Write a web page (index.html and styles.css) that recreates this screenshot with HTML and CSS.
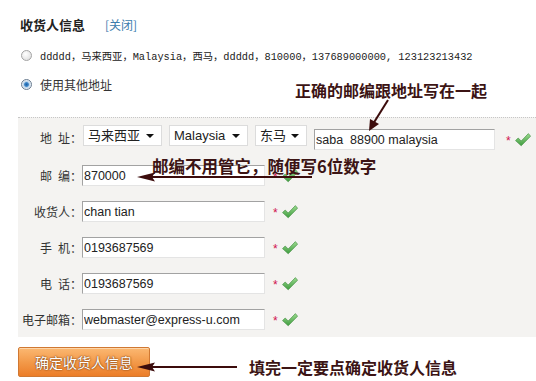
FILE: index.html
```html
<!DOCTYPE html>
<html>
	<head>
		<meta charset="utf-8">
		<link rel="stylesheet" href="styles.css">
	</head>
	<body>
		<div class="page">
			<div class="head">
				<h2>收货人信息</h2>
				<a href="#close" class="close">[关闭]</a>
			</div>

			<div class="opt">
				<span class="radio"></span>
				<span class="addr">ddddd，马来西亚，Malaysia，西马，ddddd，810000，137689000000, 123123213432</span>
			</div>
			<div class="opt">
				<span class="radio on"></span>
				<span class="other">使用其他地址</span>
			</div>

			<section class="panel">
				<div class="row first">
					<span class="lbl">地&ensp;址：</span>
					<span class="sel w1">马来西亚<i></i></span>
					<span class="sel w1">Malaysia<i></i></span>
					<span class="sel w2">东马<i></i></span>
					<input class="txt addr-in" type="text" value="saba  88900 malaysia">
					<span class="req">*</span>
					<svg class="ok" viewBox="0 0 16 14"><use href="#tick"/></svg>
				</div>
				<div class="row">
					<span class="lbl">邮&ensp;编：</span>
					<input class="txt" type="text" value="870000">
					<span class="req">*</span>
					<svg class="ok" viewBox="0 0 16 14"><use href="#tick"/></svg>
				</div>
				<div class="row">
					<span class="lbl">收货人：</span>
					<input class="txt" type="text" value="chan tian">
					<span class="req">*</span>
					<svg class="ok" viewBox="0 0 16 14"><use href="#tick"/></svg>
				</div>
				<div class="row">
					<span class="lbl">手&ensp;机：</span>
					<input class="txt" type="text" value="0193687569">
					<span class="req">*</span>
					<svg class="ok" viewBox="0 0 16 14"><use href="#tick"/></svg>
				</div>
				<div class="row">
					<span class="lbl">电&ensp;话：</span>
					<input class="txt" type="text" value="0193687569">
					<span class="req">*</span>
					<svg class="ok" viewBox="0 0 16 14"><use href="#tick"/></svg>
				</div>
				<div class="row">
					<span class="lbl">电子邮箱：</span>
					<input class="txt" type="text" value="webmaster@express-u.com">
					<span class="req">*</span>
					<svg class="ok" viewBox="0 0 16 14"><use href="#tick"/></svg>
				</div>
			</section>

			<button class="submit" type="button">确定收货人信息</button>

			<!-- notes drawn over the form -->
			<div class="note n1">正确的邮编跟地址写在一起</div>
			<div class="note n2">邮编不用管它，随便写6位数字</div>
			<div class="note n3">填完一定要点确定收货人信息</div>

			<svg class="arrows" width="536" height="381" viewBox="0 0 536 381">
				<defs>
					<linearGradient id="g" x1="0" y1="0" x2="0" y2="1">
						<stop offset="0" stop-color="#9ada8e"/>
						<stop offset="1" stop-color="#3f9c3f"/>
					</linearGradient>
					<path id="tick" d="M0.5 7.6 L3.2 5 L6.2 8 L13.4 0.6 L15.6 3.2 L6.2 12.8 Z" fill="url(#g)" stroke="#3a8a3a" stroke-width="0.6"/>
				</defs>
				<line x1="388" y1="100" x2="373" y2="124" />
				<polygon points="369,131 370,119 379,124" />
				<line x1="150" y1="177" x2="312" y2="177" />
				<polygon points="137,177 155,172.5 152,177 155,181.5" />
				<line x1="150" y1="367" x2="237" y2="367" />
				<polygon points="137,367 155,362.5 152,367 155,371.5" />
			</svg>
		</div>
	</body>
</html>
```
FILE: styles.css
```css
html, body {
	margin: 0;
	padding: 0;
	background: #fff;
}

.page {
	position: relative;
	width: 536px;
	height: 381px;
	overflow: hidden;
	color: #333;
	font-family: "Noto Sans CJK SC", sans-serif;
	font-size: 12px;
}

/* Header */
.head {
	display: flex;
	align-items: center;
	gap: 20px;
	height: 20px;
	margin: 14px 0 7px 20px;
}
.head h2 {
	margin: 0;
	font-size: 13px;
	font-weight: bold;
	color: #222;
}
.close {
	color: #3b7cad;
	text-decoration: none;
	font-size: 12px;
}

/* Address options */
.opt {
	display: flex;
	align-items: center;
	gap: 8px;
	height: 29px;
	padding-left: 21px;
}
.radio {
	width: 9px;
	height: 9px;
	border: 1px solid #a4a4a4;
	border-radius: 50%;
	background: radial-gradient(circle at 40% 35%, #fff 0, #e4e4e4 70%, #cfcfcf 100%);
}
.radio.on {
	border-color: #6a7c90;
	background: radial-gradient(circle at 50% 50%, #1d5fa6 0, #3c86c8 30%, #b9d2ea 45%, #f2f5f8 75%);
}
.addr {
	font-family: "Liberation Mono", "Noto Sans CJK SC", monospace;
	font-size: 10.3px;
	color: #222;
}
.other {
	font-size: 12px;
}

/* Form panel */
.panel {
	margin: 18px 0 0 18px;
	padding: 7px 0 7px 0;
	background: #f4f3f1;
	border-top: 1px dotted #c6c6c6;
	display: flex;
	flex-direction: column;
	gap: 15px;
}
.row {
	display: flex;
	align-items: center;
	height: 21px;
}
.row.first {
	height: 25px;
}
.lbl {
	width: 64px;
	text-align: right;
	font-size: 12px;
	color: #333;
	white-space: pre;
}

.sel {
	position: relative;
	box-sizing: border-box;
	height: 21px;
	margin: 0 6px 4px 1px;
	padding-left: 4px;
	background: #fff;
	border: 1px solid #dcdcdc;
	font-family: "Liberation Sans", "Noto Sans CJK SC", sans-serif;
	font-size: 13px;
	line-height: 19px;
	color: #222;
}
.sel.w1 { width: 79px; }
.sel.w2 { width: 52px; margin-right: 7px; }
.sel i {
	position: absolute;
	right: 7px;
	top: 8px;
	border-left: 4px solid transparent;
	border-right: 4px solid transparent;
	border-top: 4px solid #111;
}

.txt {
	box-sizing: border-box;
	width: 183px;
	height: 21px;
	margin: 0;
	padding: 0 0 0 1px;
	border: 1px solid;
	border-color: #a2a2a2 #e4e4e4 #e4e4e4 #a2a2a2;
	background: #fff;
	font-family: "Liberation Sans", sans-serif;
	font-size: 12.5px;
	color: #222;
	outline: none;
}
.txt.addr-in {
	width: 181px;
	margin-top: 4px;
}

.req {
	margin: 3px 4px 0 8px;
	color: #d0124e;
	font-family: "Liberation Sans", sans-serif;
	font-size: 12px;
}
.row.first .req { margin-left: 11px; margin-top: 7px; }
.row.first .ok { margin-top: 4px; }
.ok {
	width: 16px;
	height: 14px;
}

/* Submit */
.submit {
	display: block;
	width: 132px;
	height: 30px;
	margin: 10px 0 0 18px;
	padding: 0;
	border: 1px solid #d07832;
	border-radius: 2px;
	background: linear-gradient(#fbb872, #f39a4a 50%, #ec7d28);
	box-shadow: inset 0 1px 0 #fdd5a8;
	color: #fff;
	font-family: "Noto Sans CJK SC", sans-serif;
	font-size: 14px;
	text-shadow: 0 0 2px #7a3a0c, 0 0 1px #7a3a0c;
}

/* Notes */
.note {
	position: absolute;
	color: #3c1414;
	font-weight: bold;
	font-size: 16px;
	line-height: 20px;
	white-space: nowrap;
}
.n1 { left: 295px; top: 80px; }
.n2 { left: 152px; top: 156px; font-size: 16.5px; }
.n3 { left: 249px; top: 357px; }

.arrows {
	position: absolute;
	left: 0;
	top: 0;
	pointer-events: none;
}
.arrows line {
	stroke: #3c0c0c;
	stroke-width: 2;
}
.arrows polygon {
	fill: #3c0c0c;
}
```
